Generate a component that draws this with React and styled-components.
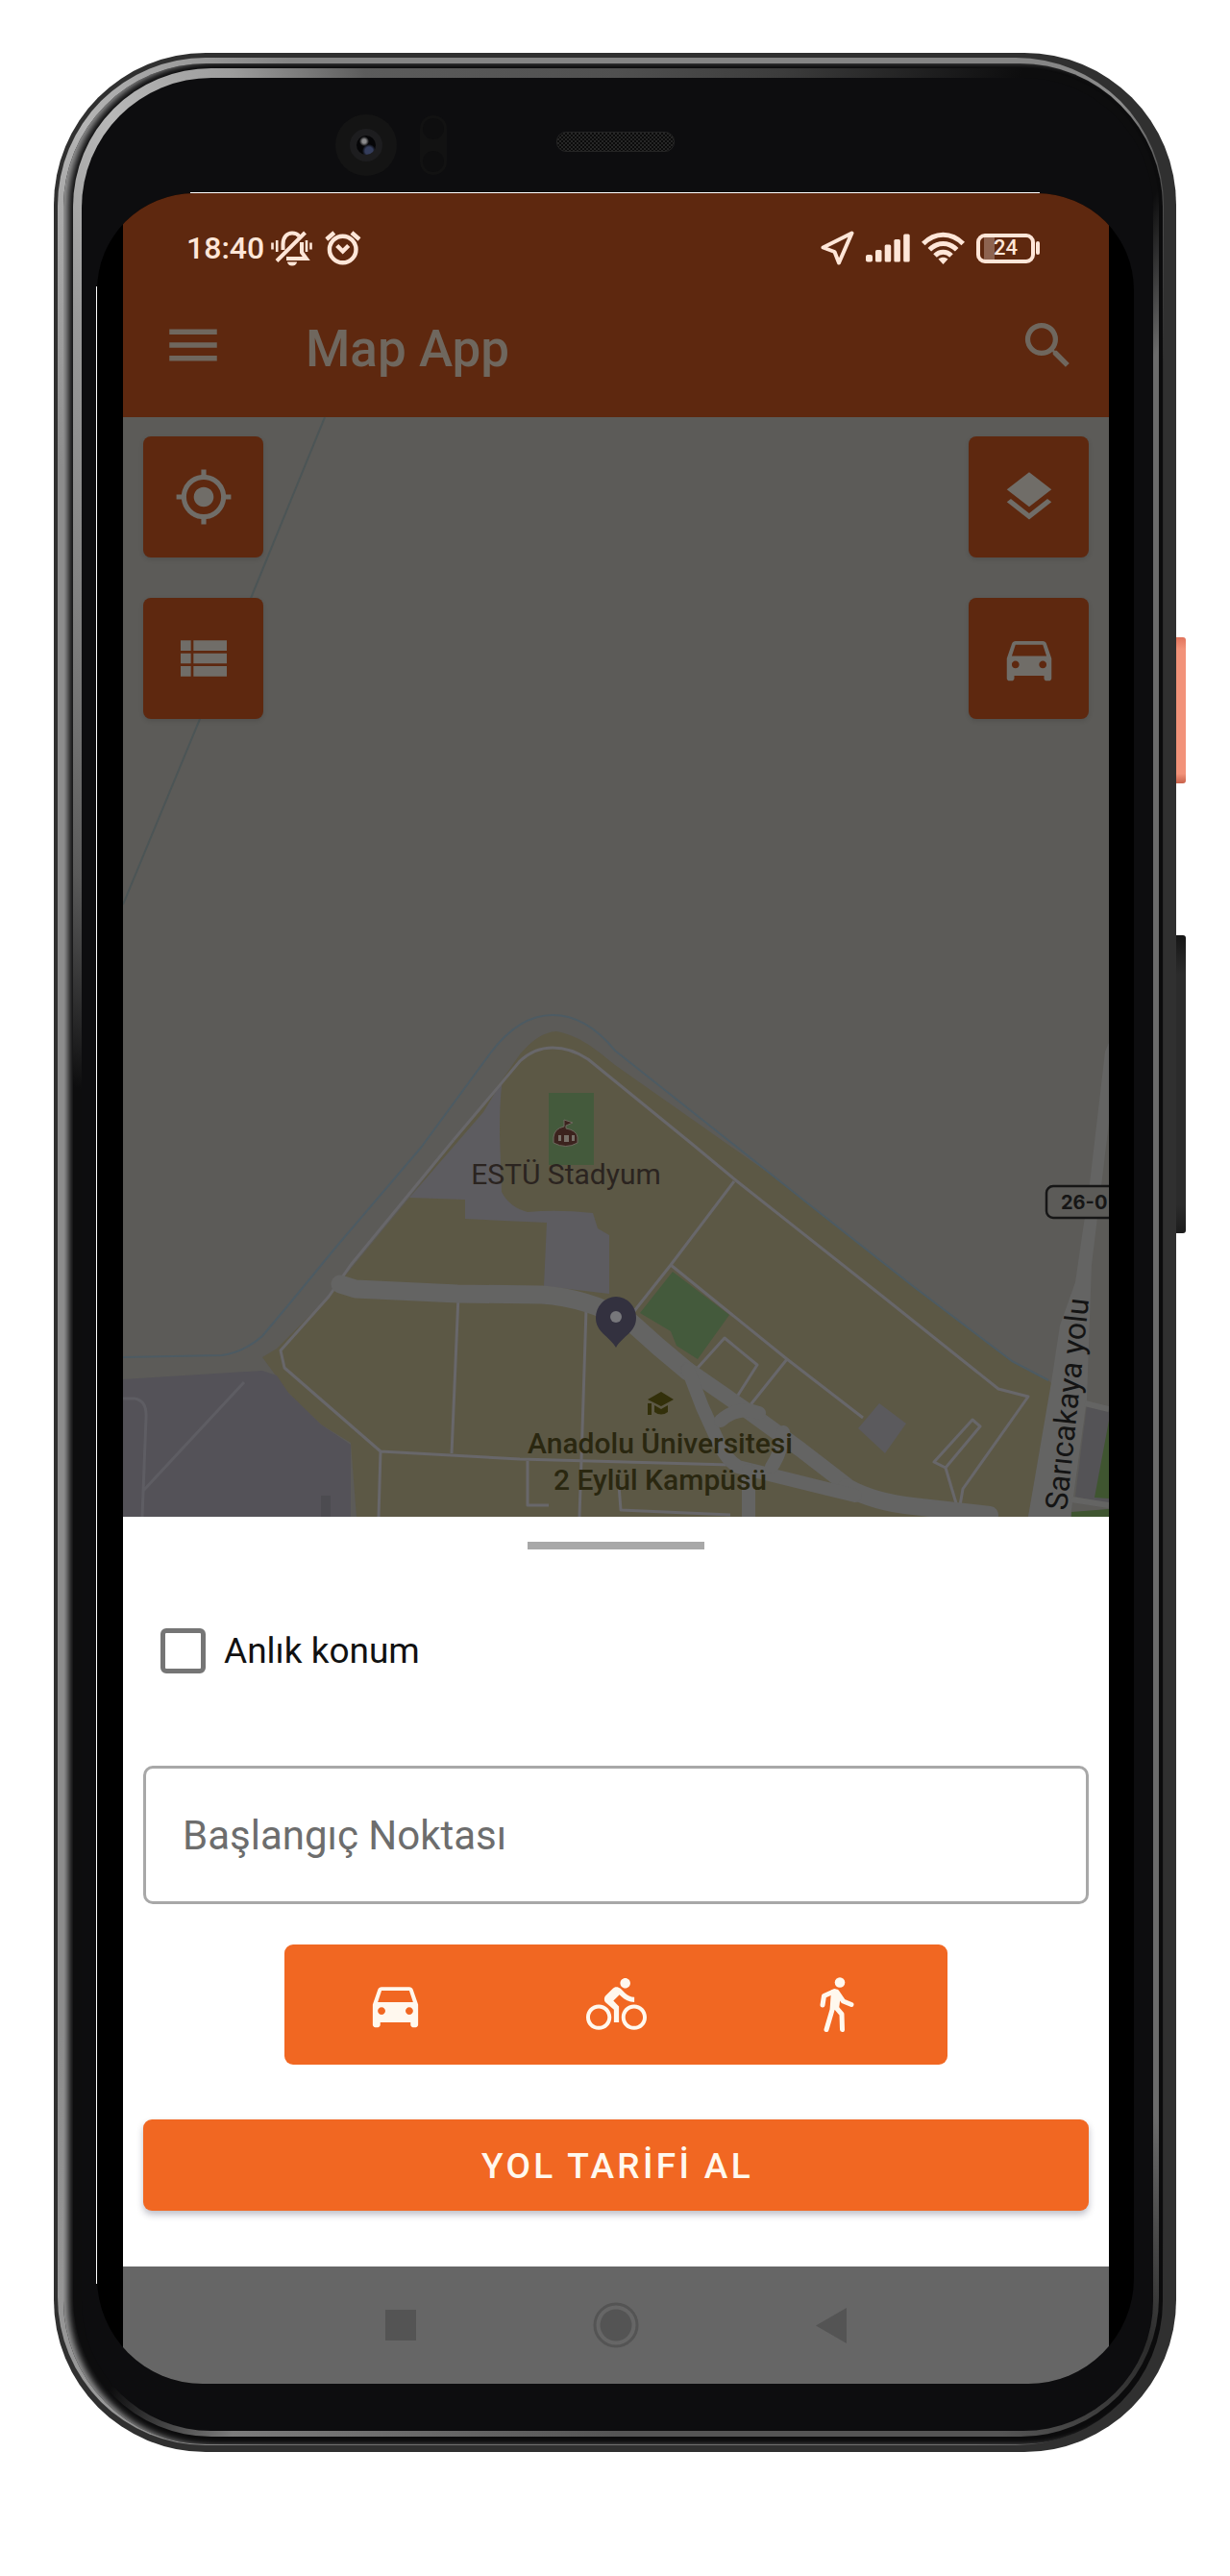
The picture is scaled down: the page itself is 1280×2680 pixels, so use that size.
import React, { useState } from "react";
import styled, { createGlobalStyle } from "styled-components";
import {
  MdDirectionsBike,
  MdDirectionsCar,
  MdLayers,
  MdMenu,
  MdMyLocation,
  MdSearch,
  MdViewList,
} from "react-icons/md";

const GlobalStyle = createGlobalStyle`
  *, *::before, *::after { box-sizing: border-box; }
  body {
    margin: 0;
    background: #fff;
    font-family: Roboto, "Liberation Sans", sans-serif;
  }
  button, input { font-family: inherit; }
`;

const ORANGE = "#f16722";
const DIM_ORANGE = "#5e280f";
const STATUS = "#ffe6d8";

/* ---------- device ---------- */

const Page = styled.div`
  display: flex;
  padding: 55px 46px 129px 56px;
`;

const Shell = styled.div`
  flex: 1;
  min-width: 0;
  padding: 5px 13px 7px 4px;
  border-radius: 158px;
  background: #303030;
`;

const Rim = styled.div`
  padding: 6px 1px 1px 6px;
  border-radius: 154px;
  background: conic-gradient(
    #858585 0deg, #858585 20deg, #8c8c8c 24deg, #555 27deg, #2a2a2a 32deg,
    #2a2a2a 150deg, #3a3a3a 156deg, #707070 163deg, #707070 196deg,
    #9a9a9a 204deg, #8c8c8c 215deg, #8c8c8c 325deg, #b5b5b5 335deg, #858585 345deg
  );
`;

const Groove = styled.div`
  padding: 5px 4px 8px 10px;
  border-radius: 149px;
  background: #0b0b0c;
  box-shadow: inset 7px 0 7px -2px #9a9a9a;
`;

const Shine = styled.div`
  padding: 10px 6px 6px 9px;
  border-radius: 144px;
  background: conic-gradient(
    #505050 0deg, #3c3c3c 8deg, #0d0d0e 19deg, #0d0d0e 27deg, #6b6b6b 31deg,
    #6b6b6b 148deg, #2c2c2c 154deg, #555 162deg, #555 180deg, #7c7c7c 198deg,
    #0d0d0e 204deg, #0d0d0e 287deg, #5a5a5a 305deg, #999 330deg,
    #b8b8b8 336deg, #9c9c9c 342deg, #5c5c5c 348deg, #505050 360deg
  );
`;

const Face = styled.div`
  padding: 0 20px 49px 15px;
  border-radius: 135px;
  background: #0d0d0f;
`;

const TopBezel = styled.div`
  display: flex;
  align-items: center;
  gap: 24px;
  height: 119px;
  padding: 20px 0 0 249px;
`;

const Camera = styled.div`
  display: flex;
  align-items: center;
  justify-content: center;
  width: 64px;
  height: 64px;
  border-radius: 50%;
  background: #141414;
`;

const Lens = styled.div`
  width: 34px;
  height: 34px;
  border: 7px solid #1d1d1f;
  border-radius: 50%;
  background:
    radial-gradient(circle at 8px 6px, #8a8a8c 0 2px, transparent 5px),
    radial-gradient(circle at 13px 16px, #343d5c 0 4px, transparent 7px),
    #050507;
`;

const Sensor = styled.div`
  display: flex;
  flex-direction: column;
  align-items: center;
  justify-content: space-between;
  width: 28px;
  height: 62px;
  padding: 3px 0;
  border-radius: 14px;
  background: #121212;
`;

const SensorEye = styled.span`
  width: 22px;
  height: 22px;
  border-radius: 50%;
  background: #0e0e0f;
`;

const Speaker = styled.div`
  width: 123px;
  height: 21px;
  margin: -6px 0 0 90px;
  border: 1px solid #242424;
  border-radius: 10px;
  background:
    repeating-conic-gradient(#262626 0 25%, #0b0b0b 0 50%) 0 0 / 4px 4px;
`;

const Glass = styled.div`
  padding: 1px 0 0 1px;
  background:
    linear-gradient(to right, transparent 98px, #fff 98px, #fff calc(100% - 98px), transparent calc(100% - 98px)) 0 0 / 100% 1px no-repeat,
    linear-gradient(to bottom, transparent 98px, #fff 98px, #fff calc(100% - 104px), transparent calc(100% - 104px)) 0 0 / 1px 100% no-repeat;
`;

const Display = styled.div`
  overflow: hidden;
  padding: 0 26px 0 27px;
  border-radius: 101px 101px 110px 110px;
  background: #000;
`;

const SideKeys = styled.div`
  display: flex;
  flex-direction: column;
  gap: 158px;
  width: 10px;
  padding-top: 608px;
`;

const SideKey = styled.div`
  height: ${(p) => (p.$power ? 152 : 310)}px;
  border-radius: 0 3px 3px 0;
  background: ${(p) =>
    p.$power
      ? "linear-gradient(#e0745c, #f29279 12px, #f29279 calc(100% - 10px), #c8614a)"
      : "linear-gradient(#161616, #2b2b2b 40px, #2b2b2b calc(100% - 30px), #1c1c1c)"};
`;

/* ---------- app chrome ---------- */

const Chrome = styled.header`
  background: ${DIM_ORANGE};
`;

const StatusBar = styled.div`
  display: flex;
  align-items: center;
  justify-content: space-between;
  height: 79px;
  padding: 35px 72px 0 66px;
  color: ${STATUS};
`;

const StatusGroup = styled.div`
  display: flex;
  align-items: center;
  gap: ${(p) => p.$gap}px;
`;

const Clock = styled.span`
  margin-right: -6px;
  font-size: 32px;
  line-height: 44px;
  font-weight: 500;
`;

const BatteryBody = styled.span`
  display: flex;
  align-items: center;
  justify-content: center;
  width: 61px;
  height: 31px;
  border: 4px solid ${STATUS};
  border-radius: 9px;
  font-size: 22px;
  line-height: 22px;
  font-weight: 500;
  background: linear-gradient(to right, transparent 4px, #8d6350 4px, #8d6350 15px, transparent 15px);
`;

const BatteryTip = styled.span`
  width: 4px;
  height: 14px;
  border-radius: 2px;
  background: ${STATUS};
`;

const AppBar = styled.div`
  display: flex;
  align-items: center;
  height: 154px;
  padding: 4px 32px 0 40px;
`;

const Title = styled.h1`
  flex: 1;
  margin: 8px 0 0 84px;
  color: #6f675e;
  font-size: 53px;
  line-height: 64px;
  font-weight: 500;
`;

const BarButton = styled.button`
  display: flex;
  padding: 0;
  border: 0;
  background: none;
  color: #6f675e;
  cursor: pointer;
`;

/* ---------- map ---------- */

const MapArea = styled.section`
  position: relative;
  display: flex;
  min-height: 1144px;
  background: #5c5b58;
`;

const MapCanvas = styled.svg`
  display: block;
  width: 100%;
  height: 1144px;
`;

const MapControls = styled.div`
  position: absolute;
  inset: 20px 21px auto;
  display: flex;
  justify-content: space-between;
`;

const ControlColumn = styled.div`
  display: flex;
  flex-direction: column;
  gap: 42px;
`;

const MapButton = styled.button`
  display: flex;
  align-items: center;
  justify-content: center;
  width: 125px;
  height: 126px;
  padding: 0;
  border: 0;
  border-radius: 8px;
  background: ${DIM_ORANGE};
  box-shadow: 0 2px 5px rgba(0, 0, 0, 0.12);
  color: #706d68;
  cursor: pointer;
`;

/* ---------- sheet ---------- */

const Sheet = styled.form`
  display: flex;
  flex-direction: column;
  padding: 26px 21px 58px;
  background: #fff;
`;

const Handle = styled.span`
  align-self: center;
  width: 184px;
  height: 8px;
  background: #a8a8a8;
`;

const CheckRow = styled.label`
  display: flex;
  align-items: center;
  align-self: flex-start;
  gap: 19px;
  margin: 82px 0 96px 18px;
  color: #111;
  font-size: 37px;
  line-height: 47px;
`;

const CheckBox = styled.input`
  appearance: none;
  width: 47px;
  height: 47px;
  margin: 0;
  border: 5px solid #757575;
  border-radius: 6px;
  background: #fff;
  &:checked {
    background: ${ORANGE};
    border-color: ${ORANGE};
  }
`;

const StartInput = styled.input`
  width: 100%;
  height: 144px;
  padding: 0 38px;
  border: 3px solid #a8a8a8;
  border-radius: 10px;
  background: #fff;
  color: #111;
  font-size: 42px;
  &::placeholder {
    color: #6d6d6d;
    opacity: 1;
  }
`;

const ModeGroup = styled.div`
  display: grid;
  grid-template-columns: repeat(3, 1fr);
  align-self: center;
  width: 690px;
  max-width: 100%;
  margin: 42px 0 57px;
  border-radius: 9px;
  background: ${ORANGE};
`;

const ModeButton = styled.button`
  display: flex;
  align-items: center;
  justify-content: center;
  height: 125px;
  padding: 0;
  border: 0;
  background: none;
  color: #fff8ee;
  cursor: pointer;
`;

const Submit = styled.button`
  height: 95px;
  padding: 3px 0 0 3px;
  border: 0;
  border-radius: 9px;
  background: ${ORANGE};
  box-shadow: 0 4px 7px rgba(40, 40, 70, 0.3);
  color: #fff8ee;
  font-size: 37px;
  line-height: 44px;
  font-weight: 500;
  letter-spacing: 0.09em;
  cursor: pointer;
`;

const NavBar = styled.nav`
  display: flex;
  align-items: center;
  justify-content: center;
  gap: 160px;
  height: 122px;
  background: #666;
`;

const NavButton = styled(BarButton)`
  justify-content: center;
  width: 64px;
  color: #545454;
`;

/* ---------- drawings ---------- */

const MutedBell = () => (
  <svg width="43" height="37" viewBox="0 0 43 37" fill="none" stroke="currentColor" strokeWidth="4" aria-hidden="true">
    <path d="M12.5 20v-6c0-7.500 4.500-11.500 9.500-11.500 3.200 0 5.600 1 7.400 3.200" />
    <path d="M35.500 2 6 31.500" />
    <path d="M32 12v10.500l4.800 6.500H16" />
    <path d="M17 32.500h10a5 4 0 0 1-10 0z" fill="currentColor" stroke="none" />
    <path d="M1.500 12.500v7M6.200 10v12M37 10v12M41.500 12.500v7" strokeWidth="2.600" />
  </svg>
);

const AlarmIcon = () => (
  <svg width="38" height="37" viewBox="0 0 38 37" fill="none" stroke="currentColor" strokeWidth="4.400" aria-hidden="true">
    <circle cx="18.700" cy="19.500" r="13.800" />
    <path d="m12.700 15.500 6 6 6-6M1.800 9l8-7M28 2l8 7" />
  </svg>
);

const ArrowIcon = () => (
  <svg width="35" height="36" viewBox="0 0 35 36" fill="none" stroke="currentColor" strokeWidth="4" strokeLinejoin="round" aria-hidden="true">
    <path d="M32.500 2.500 2.500 17.500l12 4.500 4.500 11.500z" />
  </svg>
);

const SignalIcon = () => (
  <svg width="46" height="30" viewBox="0 0 46 30" fill="currentColor" aria-hidden="true">
    <rect x="0" y="22" width="7" height="7.500" rx="2" />
    <rect x="10" y="17" width="6.500" height="12.500" rx="1.500" />
    <rect x="19.700" y="11.500" width="6.500" height="18" rx="1.500" />
    <rect x="29.400" y="6" width="6.500" height="23.500" rx="1.500" />
    <rect x="39.200" y="0.500" width="6.500" height="29" rx="1.500" />
  </svg>
);

const WifiIcon = () => (
  <svg width="45" height="34" viewBox="0 0 45 34" fill="none" stroke="currentColor" strokeWidth="5" aria-hidden="true">
    <path d="M1.800 12.500c12-12.500 29.400-12.500 41.400 0M8.300 18.800c8.500-8.500 19.900-8.500 28.400 0M14 25c5-5 12-5 17 0" />
    <path d="M17.500 28.500c3-2.500 7-2.500 10 0l-5 5.500z" fill="currentColor" stroke="none" />
  </svg>
);

const WalkIcon = () => (
  <svg width="36" height="58" viewBox="0 0 36 58" fill="none" stroke="currentColor" strokeWidth="5" strokeLinecap="round" strokeLinejoin="round" aria-hidden="true">
    <circle cx="21" cy="5.500" r="5.300" fill="currentColor" stroke="none" />
    <path d="M12 13.500 18 12.500 22 18 20 33 11.500 34z" fill="currentColor" stroke="none" />
    <path d="M15.500 14.500 4.500 19.500 3 29M18 15.500 24.500 25 33 28.500" />
    <path d="M14.500 16 13 34 7 54.500M17 31.500 23 38.500 23.500 54.500" />
  </svg>
);

const CampusMap = () => (
  <MapCanvas viewBox="0 0 1026 1144" preserveAspectRatio="xMidYMid slice" role="img" aria-label="Harita">
    <g transform="translate(-128 -434)" fill="none" strokeLinejoin="round">
      {/* campus ground */}
      <path
        fill="#5c5845"
        d="M579 1073C600 1077 615 1087 640 1108L802 1222 950 1338 1053 1416 1091 1436 1095 1440 1070 1578H371L365 1501 334 1482 300 1449 273 1412 288 1403 338 1353 365 1320 426 1246 522 1124 541 1097Q560 1074 579 1073z"
      />
      <path fill="#545258" d="M128 1435 273 1426 288 1431 300 1449 334 1482 365 1503V1578H128z" />
      <path fill="#4c4b50" d="M334 1556h10v22h-10z" />
      <path
        fill="#5d5c60"
        d="M523 1124Q520 1140 520 1180L522 1240Q530 1256 549 1261 580 1258 617 1262L622 1278 634 1285V1346L566 1338 569 1272 484 1268V1248L426 1246 503 1157z"
      />
      {/* stadium pitch and park */}
      <path fill="#445a3c" d="M571 1137h47v75h-47zM700 1323l59 45-33 46-22-14-6-15-32-19z" />
      <path fill="#5b5a5d" d="m915 1460 28 21-22 31-28-26z" />
      {/* right-hand block */}
      <path fill="#545356" d="m1131 1462 23 5v98l-35-8z" />
      <path fill="#3f5530" d="M1154 1478v81l-15-1zM1115 1573l39-3v8h-39z" />
      {/* water lines */}
      <path
        stroke="#4d5b63"
        strokeWidth="2"
        d="M128 1412 231 1410Q255 1406 273 1390L304 1353 350 1297 438 1194 510 1096Q540 1056 575 1056T640 1093L760 1188 847 1257 950 1338 1053 1416 1091 1436"
      />
      <path stroke="#4c5556" strokeWidth="2" d="M338 434 262 620 208 748 128 941" />
      {/* footpaths */}
      <g stroke="#68676a" strokeWidth="3">
        <path d="M472 1186 541 1104Q556 1090 575 1090T612 1102L720 1190 767 1229 915 1346 1039 1445 1070 1453 1002 1549 998 1572" />
        <path d="M472 1186 365 1316 342 1349 292 1405 296 1423 396 1510 541 1518 760 1524M396 1510 394 1578" />
        <path d="M477 1348 470 1512M610 1362 605 1519 603 1578" />
        <path d="M764 1229 698 1316 660 1364M698 1316 819 1414 898 1475M819 1414 779 1464" />
        <path d="M726 1423 754 1392 788 1420 767 1453" />
        <path d="M972 1521 1012 1477 1020 1484 984 1527zM984 1527 995 1564" />
        <path d="M549 1520V1566H571M644 1545 646 1571 760 1576" />
      </g>
      <g stroke="#5e5d63" strokeWidth="3">
        <path d="M128 1455H140Q153 1457 152 1475L148 1578M254 1438 149 1551" />
      </g>
      {/* main roads */}
      <g stroke="#646463" strokeLinecap="round">
        <path strokeWidth="19" d="M354 1336 370 1341 476 1346 564 1347Q610 1350 656 1375L685 1401 716 1427" />
        <path strokeWidth="16" d="M716 1425 778 1468 833 1508 881 1545" />
        <path strokeWidth="18" d="M881 1547Q910 1563 950 1567L1030 1576" />
        <path strokeWidth="14" d="M716 1425 731 1464 747 1499Q755 1518 768 1526L853 1547 890 1556" />
        <path strokeWidth="14" d="M779 1530V1578M750 1478Q768 1462 790 1470M815 1490Q813 1512 803 1526" />
      </g>
      <path
        fill="#646463"
        d="M1154 1085 1150 1094 1134 1231 1119 1334 1103 1379 1094 1438 1070 1578H1114L1131 1456 1136 1316 1154 1168z"
      />
      <path stroke="#646463" strokeWidth="6" d="m1129 1460 25 6M1115 1560l39 6" />
      {/* stadium marker */}
      <path fill="#3c231e" stroke="#6d685e" strokeWidth="1" d="M587 1172v-7l9 3-7 3v3q11 2 12 9v6q-12 7-25 0v-6q1-9 11-11z" />
      <path fill="#777068" d="M581 1181h3v6h-3zM587 1181h5v7h-5zM595 1181h3v6h-3z" />
      {/* university marker */}
      <path fill="#33300a" d="m674 1456 14-8 13 8-13 7zM674 1460h4v12h-4zM681 1462l7 4 7-4v7q-7 5-14 0z" />
      {/* location pin */}
      <path fill="#33313f" d="M641 1402C634 1390 620 1386 620 1371A21 22 0 0 1 662 1371C662 1386 648 1390 641 1402z" />
      <circle fill="#77777b" cx="641" cy="1370" r="6" />
      {/* road number */}
      <rect x="1089" y="1234" width="90" height="33" rx="7" fill="#5c5b58" stroke="#161616" strokeWidth="2.500" />
    </g>
    <g fontFamily="Roboto, 'Liberation Sans', sans-serif" fontSize="30" textAnchor="middle">
      <text x="461" y="798" fill="#2b2420">ESTÜ Stadyum</text>
      <text x="559" y="1078" fill="#2a2710" fontWeight="500">Anadolu Üniversitesi</text>
      <text x="559" y="1116" fill="#2a2710" fontWeight="500">2 Eylül Kampüsü</text>
      <text transform="translate(982 1138) rotate(-84)" textAnchor="start" fontSize="32" fill="#141414">Sarıcakaya yolu</text>
      <text x="976" y="824" textAnchor="start" fontFamily="Inter, sans-serif" fontSize="20" fontWeight="700" fill="#161616">26-0</text>
    </g>
  </MapCanvas>
);

const MODES = [
  { id: "car", label: "Araba", icon: <MdDirectionsCar size={63} /> },
  { id: "bike", label: "Bisiklet", icon: <MdDirectionsBike size={63} /> },
  { id: "walk", label: "Yürüyüş", icon: <WalkIcon /> },
];

export default function App() {
  const [live, setLive] = useState(false);
  const [start, setStart] = useState("");
  const [mode, setMode] = useState(null);

  return (
    <>
      <GlobalStyle />
      <Page>
        <Shell>
          <Rim>
            <Groove>
              <Shine>
                <Face>
                  <TopBezel>
                    <Camera><Lens /></Camera>
                    <Sensor><SensorEye /><SensorEye /></Sensor>
                    <Speaker />
                  </TopBezel>
                  <Glass>
                    <Display>
                      <Chrome>
                        <StatusBar>
                          <StatusGroup $gap={13}>
                            <Clock>18:40</Clock>
                            <MutedBell />
                            <AlarmIcon />
                          </StatusGroup>
                          <StatusGroup $gap={12}>
                            <ArrowIcon />
                            <SignalIcon />
                            <WifiIcon />
                            <StatusGroup $gap={1}>
                              <BatteryBody>24</BatteryBody>
                              <BatteryTip />
                            </StatusGroup>
                          </StatusGroup>
                        </StatusBar>
                        <AppBar>
                          <BarButton type="button" aria-label="Menü"><MdMenu size={66} /></BarButton>
                          <Title>Map App</Title>
                          <BarButton type="button" aria-label="Ara"><MdSearch size={63} /></BarButton>
                        </AppBar>
                      </Chrome>

                      <MapArea>
                        <CampusMap />
                        <MapControls>
                          <ControlColumn>
                            <MapButton type="button" aria-label="Konumum"><MdMyLocation size={62} /></MapButton>
                            <MapButton type="button" aria-label="Liste"><MdViewList size={64} /></MapButton>
                          </ControlColumn>
                          <ControlColumn>
                            <MapButton type="button" aria-label="Katmanlar"><MdLayers size={62} /></MapButton>
                            <MapButton type="button" aria-label="Yol tarifi"><MdDirectionsCar size={62} /></MapButton>
                          </ControlColumn>
                        </MapControls>
                      </MapArea>

                      <Sheet onSubmit={(e) => e.preventDefault()}>
                        <Handle />
                        <CheckRow htmlFor="live">
                          <CheckBox id="live" type="checkbox" checked={live} onChange={(e) => setLive(e.target.checked)} />
                          Anlık konum
                        </CheckRow>
                        <StartInput
                          type="text"
                          aria-label="Başlangıç Noktası"
                          placeholder="Başlangıç Noktası"
                          value={start}
                          onChange={(e) => setStart(e.target.value)}
                        />
                        <ModeGroup role="group" aria-label="Ulaşım türü">
                          {MODES.map(({ id, label, icon }) => (
                            <ModeButton
                              key={id}
                              type="button"
                              aria-label={label}
                              aria-pressed={mode === id}
                              onClick={() => setMode(id)}
                            >
                              {icon}
                            </ModeButton>
                          ))}
                        </ModeGroup>
                        <Submit type="submit">YOL TARİFİ AL</Submit>
                      </Sheet>

                      <NavBar>
                        <NavButton type="button" aria-label="Son uygulamalar">
                          <svg width="32" height="32" viewBox="0 0 32 32"><path d="M0 0h32v32H0z" fill="currentColor" /></svg>
                        </NavButton>
                        <NavButton type="button" aria-label="Ana ekran">
                          <svg width="48" height="48" viewBox="0 0 48 48">
                            <circle cx="24" cy="24" r="22" fill="none" stroke="currentColor" strokeWidth="3" />
                            <circle cx="24" cy="24" r="16.500" fill="currentColor" />
                          </svg>
                        </NavButton>
                        <NavButton type="button" aria-label="Geri">
                          <svg width="32" height="37" viewBox="0 0 32 37"><path d="M0 18.500 32 0v37z" fill="currentColor" /></svg>
                        </NavButton>
                      </NavBar>
                    </Display>
                  </Glass>
                </Face>
              </Shine>
            </Groove>
          </Rim>
        </Shell>
        <SideKeys>
          <SideKey $power />
          <SideKey />
        </SideKeys>
      </Page>
    </>
  );
}
